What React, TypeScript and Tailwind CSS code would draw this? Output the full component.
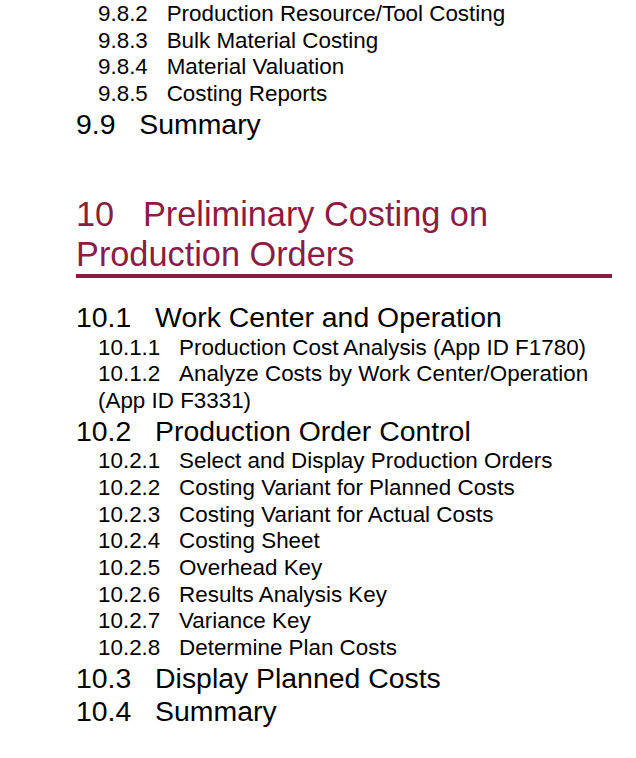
const maroon = "text-[#8b1c42]";

type Entry = { num: string; title: string; level: 2 | 3 };

const top: Entry[] = [
  { num: "9.8.2", title: "Production Resource/Tool Costing", level: 3 },
  { num: "9.8.3", title: "Bulk Material Costing", level: 3 },
  { num: "9.8.4", title: "Material Valuation", level: 3 },
  { num: "9.8.5", title: "Costing Reports", level: 3 },
  { num: "9.9", title: "Summary", level: 2 },
];

const chapter: Entry[] = [
  { num: "10.1", title: "Work Center and Operation", level: 2 },
  { num: "10.1.1", title: "Production Cost Analysis (App ID F1780)", level: 3 },
  { num: "10.1.2", title: "Analyze Costs by Work Center/Operation (App ID F3331)", level: 3 },
  { num: "10.2", title: "Production Order Control", level: 2 },
  { num: "10.2.1", title: "Select and Display Production Orders", level: 3 },
  { num: "10.2.2", title: "Costing Variant for Planned Costs", level: 3 },
  { num: "10.2.3", title: "Costing Variant for Actual Costs", level: 3 },
  { num: "10.2.4", title: "Costing Sheet", level: 3 },
  { num: "10.2.5", title: "Overhead Key", level: 3 },
  { num: "10.2.6", title: "Results Analysis Key", level: 3 },
  { num: "10.2.7", title: "Variance Key", level: 3 },
  { num: "10.2.8", title: "Determine Plan Costs", level: 3 },
  { num: "10.3", title: "Display Planned Costs", level: 2 },
  { num: "10.4", title: "Summary", level: 2 },
];

const Row = ({ entry }: { entry: Entry }) => {
  if (entry.level === 2) {
    return (
      <div className="text-[28.4px] leading-[33.5px]">
        <span className="mr-[0.84em]">{entry.num}</span>
        {entry.title}
      </div>
    );
  }
  return (
    <div className="pl-[22px] text-[22.4px] leading-[26.67px]">
      <span className="mr-[0.84em]">{entry.num}</span>
      {entry.title}
    </div>
  );
};

const App = () => {
  return (
    <div className="w-[636px] h-[758px] overflow-hidden bg-white text-black font-['Liberation_Sans',Arial,sans-serif] pt-[1px] pl-[76px] pr-[24px]">
      {/* tail of chapter 9 */}
      <div>
        {top.map((e) => (
          <Row key={e.num} entry={e} />
        ))}
      </div>

      {/* chapter heading */}
      <h1 className={`mt-[53px] text-[34.3px] leading-[40px] ${maroon} border-b-4 border-[#8b1c42]`}>
        <span className="mr-[0.84em]">10</span>
        Preliminary Costing on Production Orders
      </h1>

      <div className="mt-[23px]">
        {chapter.map((e) => (
          <Row key={e.num} entry={e} />
        ))}
      </div>
    </div>
  );
};

export default App;
